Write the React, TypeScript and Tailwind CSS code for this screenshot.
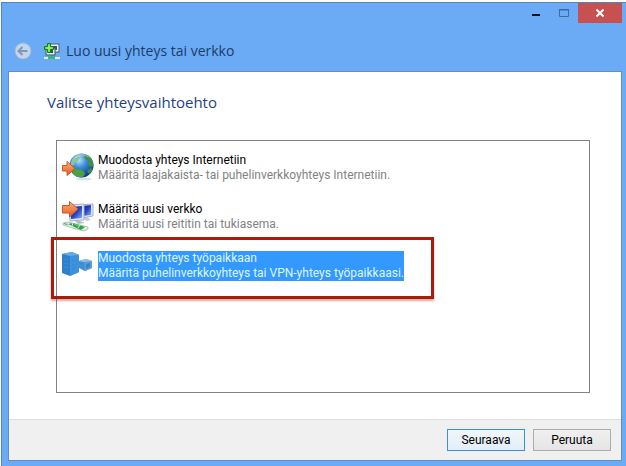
import { useState } from 'react';

const options = [
  {
    title: 'Muodosta yhteys Internetiin',
    description: 'Määritä laajakaista- tai puhelinverkkoyhteys Internetiin.',
    icon: GlobeIcon,
  },
  {
    title: 'Määritä uusi verkko',
    description: 'Määritä uusi reititin tai tukiasema.',
    icon: NetworkIcon,
  },
  {
    title: 'Muodosta yhteys työpaikkaan',
    description: 'Määritä puhelinverkkoyhteys tai VPN-yhteys työpaikkaasi.',
    icon: WorkplaceIcon,
  },
];

function WizardIcon() {
  return (
    <svg width="16" height="17" viewBox="0 0 16 17" aria-hidden="true">
      <rect x="6" y="1" width="9" height="8" fill="#e8eef2" stroke="#4c6478" />
      <rect x="8" y="3" width="5" height="4" fill="#36536f" />
      <rect x="2" y="5" width="9" height="7" fill="#dfe8e6" stroke="#40586a" />
      <rect x="4" y="7" width="5" height="3" fill="#2e506b" />
      <path d="M7 12h2v2H7z" fill="#24996c" />
      <path d="M0 14h16v2H0z" fill="#d9efee" />
      <path d="M4 13h7v3H4z" fill="#35b788" />
      <path
        d="M3.5.5h3v3h3v3h-3v3h-3v-3h-3v-3h3z"
        fill="#5fe23f"
        stroke="#167a20"
      />
      <path d="M5 2v6M2 5h6" stroke="#a8f765" strokeWidth="1" />
    </svg>
  );
}

function GlobeIcon() {
  return (
    <svg width="32" height="32" viewBox="0 0 32 32" aria-hidden="true">
      <defs>
        <radialGradient id="ocean" cx="0.4" cy="0.28" r="0.75">
          <stop offset="0" stopColor="#b4e4ff" />
          <stop offset="0.4" stopColor="#3c8edb" />
          <stop offset="1" stopColor="#0a3389" />
        </radialGradient>
        <linearGradient id="arrow" x2="0" y2="1">
          <stop offset="0" stopColor="#ffb07a" />
          <stop offset="1" stopColor="#e8561a" />
        </linearGradient>
        <clipPath id="globe">
          <circle cx="19.500" cy="13.500" r="12" />
        </clipPath>
      </defs>
      <ellipse cx="22" cy="27" rx="8" ry="1.5" fill="#d5e3ef" />
      <circle cx="19.500" cy="13.500" r="12" fill="url(#ocean)" />
      <g clipPath="url(#globe)">
        <path
          d="M9 10c2-4 5-6 9-7l1 2-2 2-1 2-3 1-1 3-3 1z"
          fill="#8cc39a"
        />
        <path d="M22 1c6 2 10 7 10 13l-4 1-2-3 1-3-4-2-1-3 2-1z" fill="#3f9143" />
        <path d="M10 19l4-2 6 1 3 3-1 3-4 3-6-3z" fill="#48a33c" />
        <path d="M25 19l4-3 2 2-4 4z" fill="#3c8f3c" />
        <path d="M9 10c3-5 13-8 19-4-4-7-14-7-19 4z" fill="#ffffff" opacity="0.3" />
      </g>
      <path
        d="M.5 13.500h4.500V9.500l8 7-8 7v-4.500H.5z"
        fill="url(#arrow)"
        stroke="#c35a28"
      />
    </svg>
  );
}

function NetworkIcon() {
  return (
    <svg width="32" height="32" viewBox="0 0 32 32" aria-hidden="true">
      <defs>
        <linearGradient id="screen" x2="1" y2="1">
          <stop offset="0" stopColor="#101e88" />
          <stop offset="0.5" stopColor="#2340c8" />
          <stop offset="1" stopColor="#8ab4f4" />
        </linearGradient>
        <linearGradient id="arrowLarge" x2="0" y2="1">
          <stop offset="0" stopColor="#ffb07a" />
          <stop offset="1" stopColor="#e8561a" />
        </linearGradient>
      </defs>
      <path d="M21 17l4-1 4 3-5 1z" fill="#c5cbd4" />
      <path d="M18 4l13-1v12l-11 2z" fill="#dfe5f0" stroke="#a7b0c4" />
      <path d="M20 5l9-1v10l-9 1z" fill="url(#screen)" />
      <path d="M7 4l15-1v16L8 20z" fill="#dfe5f0" stroke="#a7b0c4" />
      <path d="M9 6l11-1v12l-11 1z" fill="url(#screen)" />
      <path d="M13 20h5l5 2-7 1z" fill="#b5bcca" />
      <path
        d="M.5 4.500h7V.5l8.500 7.500-8.500 8v-4h-7z"
        fill="url(#arrowLarge)"
        stroke="#c35a28"
      />
      <path d="M1 22l5-1 20 5v2l-4 2-8-2-13-4z" fill="#e3ebe3" stroke="#b3c2b4" />
      <path d="M6 23l5-1 12 4-4 3z" fill="#27a548" />
      <path d="M2 22l4 1-1 1-3-1z" fill="#52a566" />
      <path d="M11 22l-1 3M18 24l-2 3" stroke="#d9f2dd" />
      <path d="M12 23l5 2" stroke="#67d67f" />
    </svg>
  );
}

function WorkplaceIcon() {
  return (
    <svg width="32" height="32" viewBox="0 0 32 32" aria-hidden="true">
      <path d="M17 11l7-2 6 2v7l-7 3-6-3z" fill="#3f8fd4" />
      <path d="M22 12l8-1v7l-7 3z" fill="#5c9fd8" />
      <path d="M17 11l7-2 6 2-8 1z" fill="#8dc1ea" />
      <path d="M24 14l4-1v4l-4 2z" fill="#3c84c4" />
      <path d="M0 4l10-2 7 3v17l-9 4-8-3z" fill="#2f80cb" />
      <path d="M8 6l9-1v17l-9 4z" fill="#3c92dc" />
      <path d="M0 4l10-2 7 3-9 1z" fill="#62aae6" />
      <path d="M2 9l4 1M2 13l4 1M2 17l4 1" stroke="#3d8dd5" />
      <path d="M10 11l5-1M10 15l5-1M10 19l5-1" stroke="#368ad4" />
    </svg>
  );
}

export default function App() {
  const [selected, setSelected] = useState(2);

  return (
    <div className="min-h-screen flex flex-col bg-white pt-0.5 pl-px font-['Roboto','Open_Sans',sans-serif] text-xs text-black">
      <div className="flex-1 flex flex-col bg-[#6babf5] border-t border-l border-[#5485bd] pl-1.5 pr-1 pb-[5px]">
        <header>
          <div className="flex justify-end">
            <button type="button" aria-label="Pienennä" className="w-7 h-5 flex items-center justify-center">
              <svg width="8" height="2" viewBox="0 0 8 2" className="mt-1">
                <path d="M0 0h8v2H0z" fill="#10151c" />
              </svg>
            </button>
            <button type="button" aria-label="Suurenna" className="w-7 h-5 flex items-center justify-center">
              <svg width="10" height="8" viewBox="0 0 10 8">
                <path d="M.5 1h9v6.500h-9z" fill="none" stroke="#40699d" />
                <path d="M0 .5h10" stroke="#40699d" />
              </svg>
            </button>
            <button type="button" aria-label="Sulje" className="w-11 h-5 flex items-center justify-center bg-[#c75050]">
              <svg width="8" height="8" viewBox="0 0 8 8">
                <path d="M.5.5l7 7M7.500.5l-7 7" stroke="#fff" strokeWidth="2" />
              </svg>
            </button>
          </div>
          <div className="flex items-center h-12 pl-1.5 pt-2 gap-3">
            <button type="button" aria-label="Takaisin">
              <svg width="18" height="18" viewBox="0 0 18 18">
                <circle cx="9" cy="9" r="8" fill="#c2d5eb" stroke="#9fb9d7" />
                <path
                  d="M13.500 9H5M8.500 5L4.500 9l4 4"
                  fill="none"
                  stroke="#8299b3"
                  strokeWidth="2"
                />
              </svg>
            </button>
            <div className="flex items-center gap-1.5">
              <WizardIcon />
              <span className="text-[14px] leading-5 text-[#1b3c69] font-['Open_Sans',sans-serif]">
                Luo uusi yhteys tai verkko
              </span>
            </div>
          </div>
        </header>

        <main className="flex-1 flex flex-col bg-white border border-[#5c8fc9]">
          <div className="flex-1 flex flex-col pt-[18px] pl-[38px] pr-[31px] pb-[26px]">
            <h1 className="text-[15px] leading-6 text-[#1f3f83] font-['Open_Sans',sans-serif]">
              Valitse yhteysvaihtoehto
            </h1>
            <ul className="flex-1 ml-[9px] mt-[26px] border border-[#828282] pt-[3px] pl-[5px]">
              {options.map((option, index) => {
                const Icon = option.icon;
                const isSelected = index === selected;
                return (
                  <li key={option.title} className="relative">
                    <button
                      type="button"
                      aria-pressed={isSelected}
                      onClick={() => setSelected(index)}
                      className="flex items-center gap-1 h-[49px] pb-0.5 text-left leading-[15px]"
                    >
                      <Icon />
                      <span
                        className={
                          isSelected
                            ? 'bg-[#3399ff] text-[#dff6ff]'
                            : 'text-black'
                        }
                      >
                        <span className="block">{option.title}</span>
                        <span className={isSelected ? 'block' : 'block text-[#838383]'}>
                          {option.description}
                        </span>
                      </span>
                    </button>
                    {index === 2 && (
                      <span className="absolute -left-[11px] -top-[5px] w-[383px] h-[62px] border-3 border-[#a81c0c] shadow-[0_2px_2px_rgba(130,50,40,0.4)] pointer-events-none" />
                    )}
                  </li>
                );
              })}
            </ul>
          </div>
          <footer className="flex justify-end gap-2 bg-[#f0f0f0] border-t border-[#dfdfdf] py-[9px] pr-2.5">
            <button
              type="button"
              className="w-[78px] h-[22px] border border-[#3c8fe0] bg-linear-to-b from-[#f0f6fb] to-[#e3eef8]"
            >
              Seuraava
            </button>
            <button
              type="button"
              className="w-[78px] h-[22px] border border-[#acacac] bg-linear-to-b from-[#f0f0f0] to-[#e5e5e5]"
            >
              Peruuta
            </button>
          </footer>
        </main>
      </div>
    </div>
  );
}
